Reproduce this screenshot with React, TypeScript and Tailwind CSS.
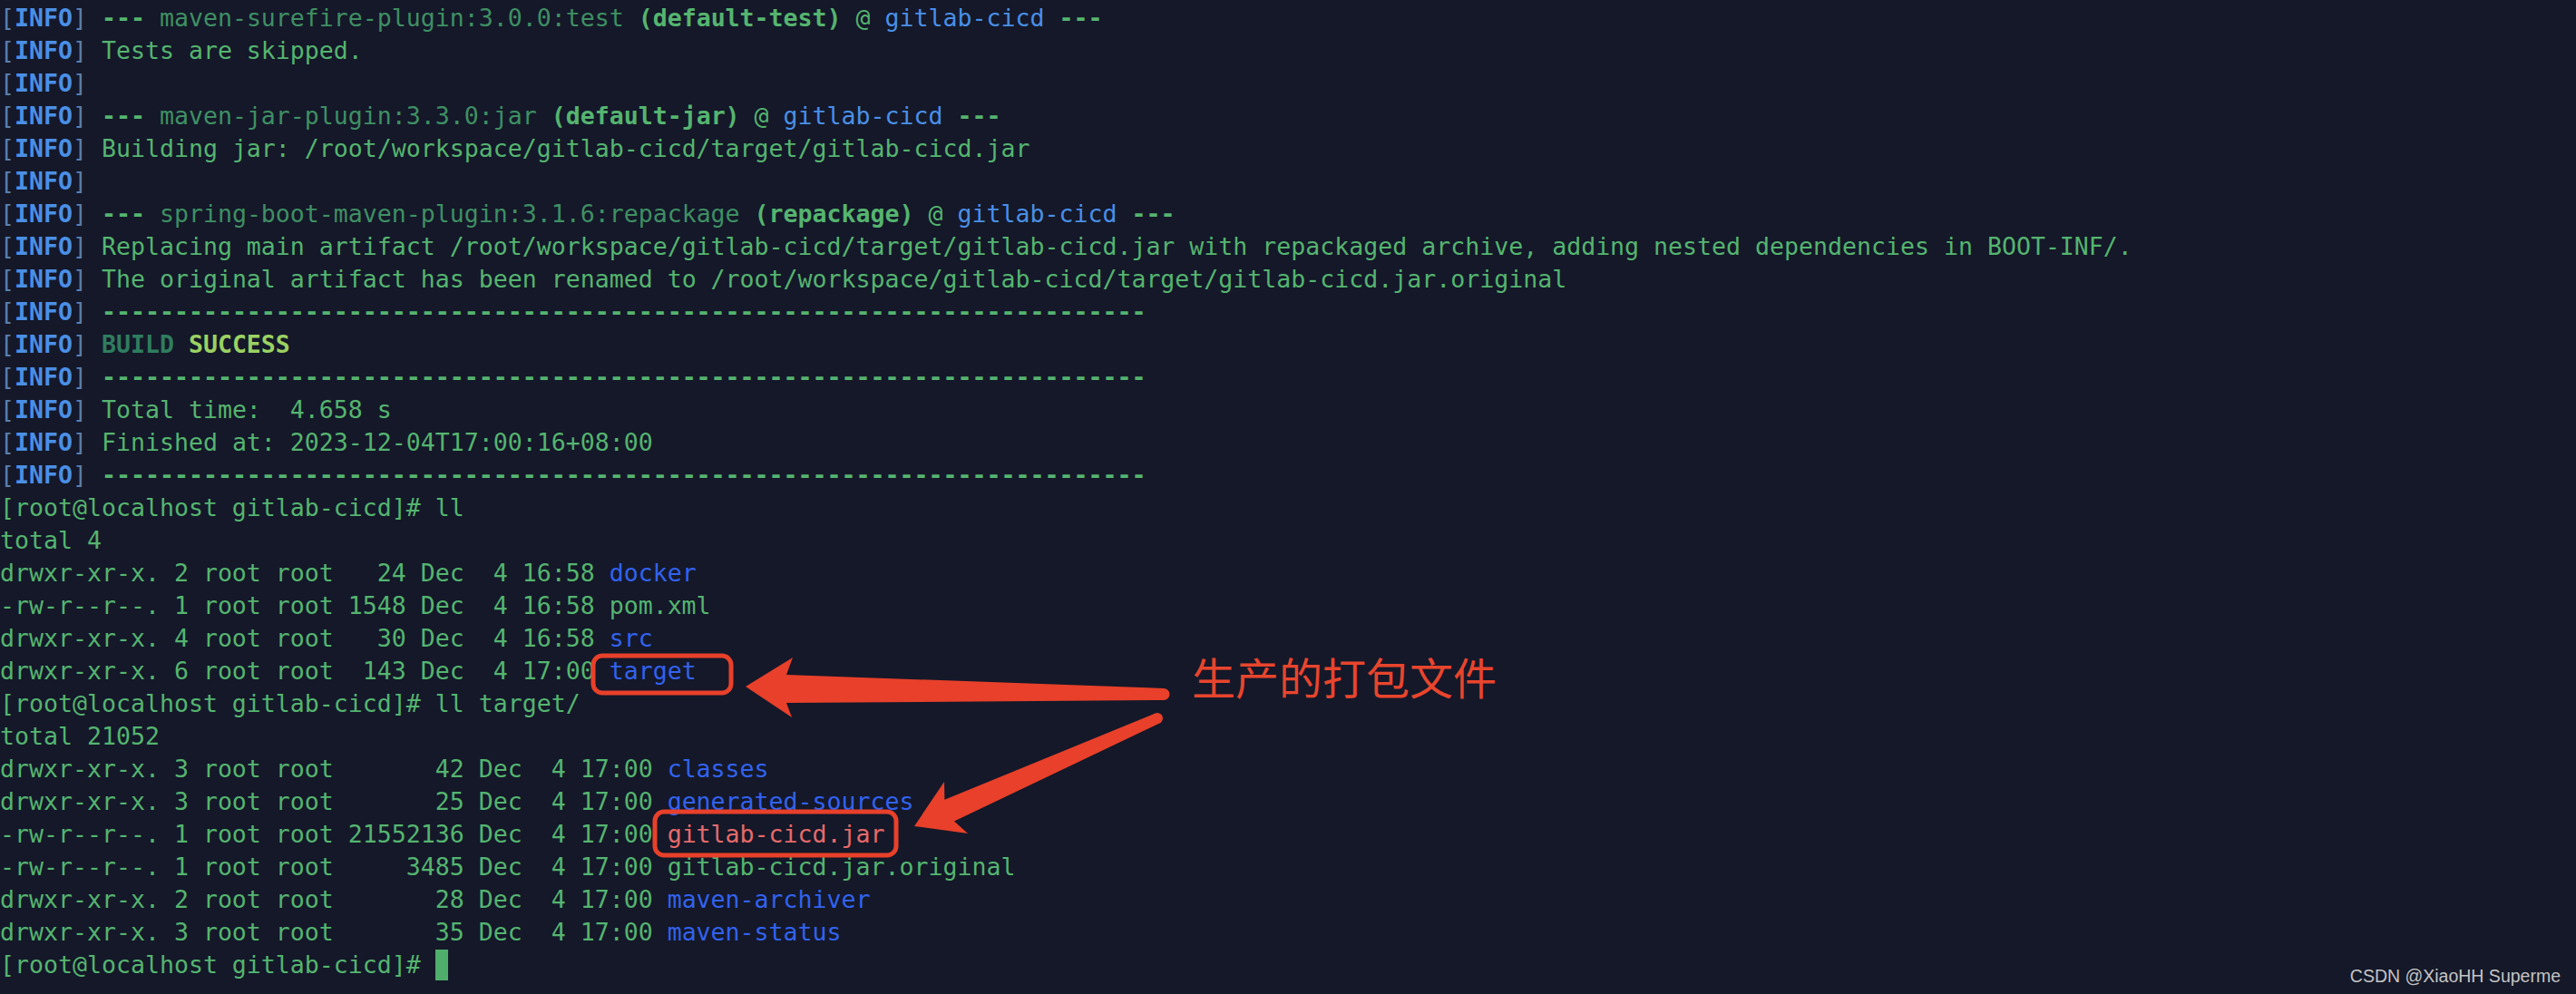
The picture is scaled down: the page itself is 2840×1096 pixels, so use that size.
import React from "react";

type Seg = { t: string; c: string; b?: boolean };

const BR = "text-[#5b7fae]";
const INFO = "text-[#4a8fe6]";
const G = "text-[#55b46f]";
const DG = "text-[#3f8f63]";
const BL = "text-[#4a8fe6]";
const DIR = "text-[#3262ee]";
const RED = "text-[#e66a6a]";

const info = (rest: Seg[]): Seg[] => [
  { t: "[", c: BR },
  { t: "INFO", c: INFO, b: true },
  { t: "] ", c: BR },
  ...rest,
];

const plugin = (name: string, exec: string): Seg[] =>
  info([
    { t: "---", c: G, b: true },
    { t: " " + name + " ", c: DG },
    { t: "(" + exec + ")", c: G, b: true },
    { t: " @ ", c: G },
    { t: "gitlab-cicd", c: BL },
    { t: " ", c: G },
    { t: "---", c: G, b: true },
  ]);

const dashes = "-".repeat(72);

const lines: Seg[][] = [
  plugin("maven-surefire-plugin:3.0.0:test", "default-test"),
  info([{ t: "Tests are skipped.", c: G }]),
  info([]),
  plugin("maven-jar-plugin:3.3.0:jar", "default-jar"),
  info([{ t: "Building jar: /root/workspace/gitlab-cicd/target/gitlab-cicd.jar", c: G }]),
  info([]),
  plugin("spring-boot-maven-plugin:3.1.6:repackage", "repackage"),
  info([
    {
      t: "Replacing main artifact /root/workspace/gitlab-cicd/target/gitlab-cicd.jar with repackaged archive, adding nested dependencies in BOOT-INF/.",
      c: G,
    },
  ]),
  info([{ t: "The original artifact has been renamed to /root/workspace/gitlab-cicd/target/gitlab-cicd.jar.original", c: G }]),
  info([{ t: dashes, c: G, b: true }]),
  info([
    { t: "BUILD ", c: "text-[#2f7d5f]", b: true },
    { t: "SUCCESS", c: "text-[#9bd163]", b: true },
  ]),
  info([{ t: dashes, c: G, b: true }]),
  info([{ t: "Total time:  4.658 s", c: G }]),
  info([{ t: "Finished at: 2023-12-04T17:00:16+08:00", c: G }]),
  info([{ t: dashes, c: G, b: true }]),
  [{ t: "[root@localhost gitlab-cicd]# ll", c: G }],
  [{ t: "total 4", c: G }],
  [{ t: "drwxr-xr-x. 2 root root   24 Dec  4 16:58 ", c: G }, { t: "docker", c: DIR }],
  [{ t: "-rw-r--r--. 1 root root 1548 Dec  4 16:58 pom.xml", c: G }],
  [{ t: "drwxr-xr-x. 4 root root   30 Dec  4 16:58 ", c: G }, { t: "src", c: DIR }],
  [{ t: "drwxr-xr-x. 6 root root  143 Dec  4 17:00 ", c: G }, { t: "target", c: DIR }],
  [{ t: "[root@localhost gitlab-cicd]# ll target/", c: G }],
  [{ t: "total 21052", c: G }],
  [{ t: "drwxr-xr-x. 3 root root       42 Dec  4 17:00 ", c: G }, { t: "classes", c: DIR }],
  [{ t: "drwxr-xr-x. 3 root root       25 Dec  4 17:00 ", c: G }, { t: "generated-sources", c: DIR }],
  [{ t: "-rw-r--r--. 1 root root 21552136 Dec  4 17:00 ", c: G }, { t: "gitlab-cicd.jar", c: RED }],
  [{ t: "-rw-r--r--. 1 root root     3485 Dec  4 17:00 gitlab-cicd.jar.original", c: G }],
  [{ t: "drwxr-xr-x. 2 root root       28 Dec  4 17:00 ", c: G }, { t: "maven-archiver", c: DIR }],
  [{ t: "drwxr-xr-x. 3 root root       35 Dec  4 17:00 ", c: G }, { t: "maven-status", c: DIR }],
];

export default function App() {
  return (
    <div className="relative w-[2840px] h-[1096px] overflow-hidden bg-[#141829]">
      <div
        className="flex flex-col pt-[2px] text-[26.57px] leading-[36px] whitespace-pre"
        style={{ fontFamily: '"DejaVu Sans Mono", "Liberation Mono", monospace' }}
      >
        {lines.map((segs, i) => (
          <div key={i} className="h-[36px]">
            {segs.map((s, j) => (
              <span key={j} className={s.c + (s.b ? " font-bold" : "")}>
                {s.t}
              </span>
            ))}
          </div>
        ))}
        <div className="h-[36px] flex items-center">
          <span className={G}>[root@localhost gitlab-cicd]# </span>
          <span className="inline-block w-[14px] h-[34px] bg-[#4fae6c]" />
        </div>
      </div>

      <svg className="absolute left-0 top-0" width="2840" height="1096" viewBox="0 0 2840 1096">
        <rect x="654" y="723" width="152" height="41" rx="10" fill="none" stroke="#e8402a" strokeWidth="5" />
        <rect x="722" y="895" width="266" height="48" rx="10" fill="none" stroke="#e8402a" strokeWidth="5" />
        <polygon
          points="822,757 874,725 867,744 1283,759 1283,772 867,775 873,791"
          fill="#e8402a"
        />
        <circle cx="1283" cy="765.5" r="6.5" fill="#e8402a" />
        <polygon
          points="1008,911 1041,862 1041.4,881.8 1273.6,786.5 1278.4,797.5 1052,905.6 1067,919"
          fill="#e8402a"
        />
        <circle cx="1276" cy="792" r="6" fill="#e8402a" />
      </svg>

      <div
        className="absolute left-[1314px] top-[721px] text-[48px] leading-[48px] text-[#e8452d] whitespace-nowrap"
        style={{ fontFamily: '"Noto Sans CJK SC", "Noto Sans", sans-serif' }}
      >
        生产的打包文件
      </div>

      <div
        className="absolute right-[17px] top-[1062px] text-[19.5px] leading-[28px] text-[#c4c4c4] whitespace-nowrap"
        style={{ fontFamily: '"Liberation Sans", Arial, sans-serif' }}
      >
        CSDN @XiaoHH Superme
      </div>
    </div>
  );
}
